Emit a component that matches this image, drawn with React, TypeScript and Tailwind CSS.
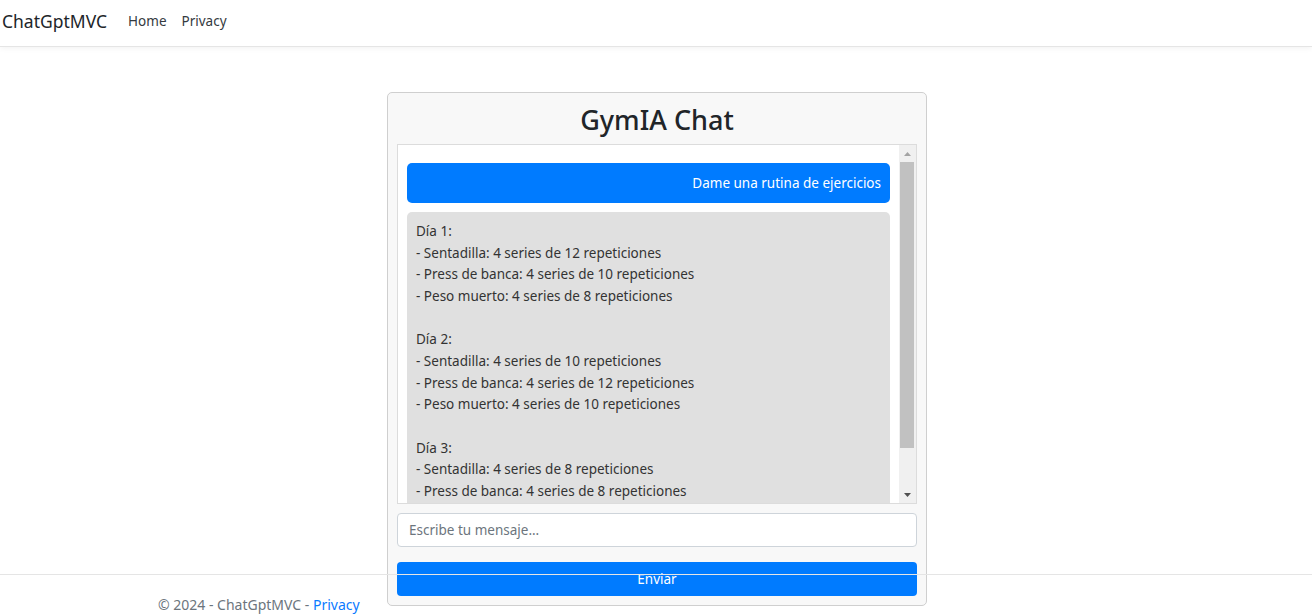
import React from "react";

const dias = [
  {
    titulo: "Día 1:",
    items: [
      "- Sentadilla: 4 series de 12 repeticiones",
      "- Press de banca: 4 series de 10 repeticiones",
      "- Peso muerto: 4 series de 8 repeticiones",
    ],
  },
  {
    titulo: "Día 2:",
    items: [
      "- Sentadilla: 4 series de 10 repeticiones",
      "- Press de banca: 4 series de 12 repeticiones",
      "- Peso muerto: 4 series de 10 repeticiones",
    ],
  },
  {
    titulo: "Día 3:",
    items: [
      "- Sentadilla: 4 series de 8 repeticiones",
      "- Press de banca: 4 series de 8 repeticiones",
      "- Peso muerto: 4 series de 6 repeticiones",
    ],
  },
];

function Arrow({ up, color }: { up?: boolean; color: string }) {
  return (
    <svg width="7" height="4" viewBox="0 0 7 4">
      <path d={up ? "M0 4 L3.5 0 L7 4 Z" : "M0 0 L7 0 L3.5 4 Z"} fill={color} />
    </svg>
  );
}

export default function App() {
  return (
    <div
      className="relative min-h-[615px] bg-white text-[13.5px] text-[#212529]"
      style={{ fontFamily: '"Segoe UI", "Noto Sans", "Open Sans", sans-serif' }}
    >
      {/* Navbar */}
      <nav className="flex h-[47px] items-center border-b border-[#e5e5e5] bg-white pb-[4px] shadow-[0_1px_6px_rgba(0,0,0,0.06)]">
        <a href="#" className="ml-[2px] text-[17.5px] text-[#212529]">
          ChatGptMVC
        </a>
        <div className="ml-[13px] flex">
          <a href="#" className="px-[8px] text-[13.5px] text-[#343a40]">Home</a>
          <a href="#" className="px-[7px] text-[13.5px] text-[#343a40]">Privacy</a>
        </div>
      </nav>

      {/* Chat */}
      <div className="flex justify-center pl-[2px] pt-[45px]">
        <div className="w-[540px] rounded-[5px] border border-[#cfcfcf] bg-[#f8f8f8] p-[9px]">
          <h2 className="mb-[6px] text-center text-[27px] font-medium leading-[36px] text-[#212529]">
            GymIA Chat
          </h2>
          <div className="flex h-[360px] border border-[#dcdcdc] bg-white">
            <div className="flex-1 overflow-hidden px-[9px] pt-[18px]">
              <div className="rounded-[5px] bg-[#007bff] px-[9px] py-[9px] text-right leading-[22px] text-white">
                Dame una rutina de ejercicios
              </div>
              <div className="my-[9px] rounded-[5px] bg-[#e0e0e0] px-[9px] py-[9px] leading-[21.67px] text-[#333]">
                {dias.map((d, i) => (
                  <div key={d.titulo} className={i < dias.length - 1 ? "mb-[21.67px]" : ""}>
                    <div>{d.titulo}</div>
                    {d.items.map((it) => (
                      <div key={it}>{it}</div>
                    ))}
                  </div>
                ))}
              </div>
            </div>
            {/* scrollbar */}
            <div className="flex w-[17px] flex-col bg-[#f0f0f0]">
              <div className="flex h-[17px] items-center justify-center">
                <Arrow up color="#a3a3a3" />
              </div>
              <div className="flex-1">
                <div className="ml-[1px] mr-[2px] h-[286px] bg-[#c1c1c1]" />
              </div>
              <div className="flex h-[17px] items-center justify-center">
                <Arrow color="#505050" />
              </div>
            </div>
          </div>
          <input
            placeholder="Escribe tu mensaje..."
            className="mt-[9px] h-[34px] w-full rounded-[4px] border border-[#ced4da] bg-white px-[11px] text-[13.5px] outline-none placeholder:text-[#6c757d]"
          />
          <button className="mt-[15px] h-[34px] w-full rounded-[4px] bg-[#007bff] text-[13.5px] text-white">
            Enviar
          </button>
        </div>
      </div>

      {/* Footer */}
      <footer className="absolute left-0 top-[574px] w-full whitespace-nowrap border-t border-[#e5e5e5] text-[14px] leading-[60px] text-[#6c757d]">
        <div className="pl-[158px]">
          © 2024 - ChatGptMVC - <a href="#" className="text-[#0a7bff]">Privacy</a>
        </div>
      </footer>
    </div>
  );
}
